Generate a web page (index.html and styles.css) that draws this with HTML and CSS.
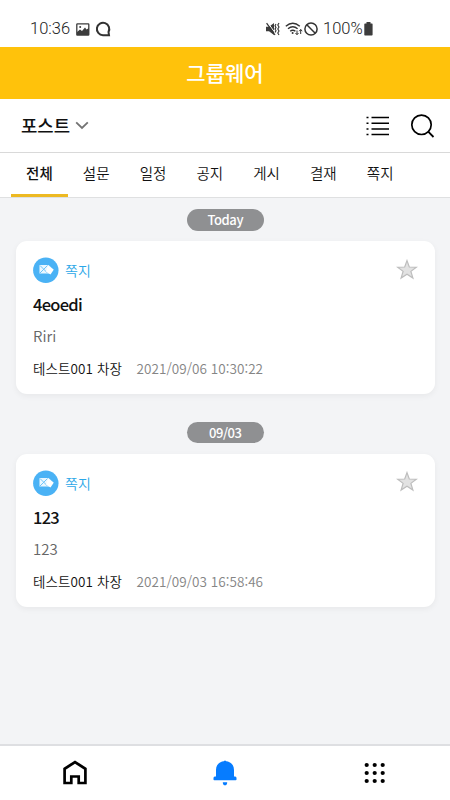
FILE: index.html
```html
<!DOCTYPE html>
<html lang="ko">
<head>
<meta charset="utf-8">
<meta name="viewport" content="width=device-width, initial-scale=1">
<title>그룹웨어</title>
<link rel="stylesheet" href="styles.css">
</head>
<body>
<svg class="defs" width="0" height="0">
  <symbol id="message" viewBox="0 0 26 26">
    <circle cx="12.800" cy="13.200" r="12.700" fill="#4ab2f5"/>
    <path d="M6.500 8h9l5 4.500-3.500 4H6.500z" fill="#eaf7ff"/>
    <path d="M7 8.500l7.500 7.500M7 16L14.500 8.500" stroke="#71c4f8" stroke-width="1" fill="none"/>
    <path d="M15 8.800l5.700 4-3.200 4.700-4.500-3z" fill="#fff"/>
  </symbol>
  <symbol id="star" viewBox="0 0 22 21">
    <path d="M11 1.600l2.300 6.400 7 .2-5.400 4.200 2 6.600L11 15.200 5.100 19l2-6.600L1.700 8.200l7-.2z" fill="#e2e2e2" stroke="#bdbdbd" stroke-width="1.200"/>
  </symbol>
</svg>
<div class="app">
  <div class="status">
    <span class="clock">10:36</span>
    <svg class="s-photo" width="14" height="13" viewBox="0 0 14 13"><rect x=".8" y=".8" width="12" height="11.400" rx=".6" fill="none" stroke="#3c3c3c" stroke-width="1.300"/><path d="M1 9l3-2.500 2 1.500 3-3.500 1.500 2L13 5v7H1z" fill="#3c3c3c"/><circle cx="4.200" cy="4" r="1" fill="#3c3c3c"/></svg>
    <svg class="s-chat" width="16" height="16" viewBox="0 0 16 16"><path d="M14 14.200H8A6.200 6.200 0 1 1 13.500 11z" fill="none" stroke="#333" stroke-width="2"/></svg>
    <svg class="s-mute" width="14" height="14" viewBox="0 0 14 14"><path d="M0 4.800h3L8 1v12L3 9.200H0z" fill="#3c3c3c"/><path d="M1.800 .8l8 11" stroke="#fff" stroke-width="1"/><path d="M.6 1.200L9 13" stroke="#333" stroke-width="1.200"/><path d="M10 2l-1 1.700 1 1.700-1 1.700 1 1.700-1 1.700M13 1l-1.200 2L13 5l-1.200 2L13 9l-1.200 2 1.200 2" fill="none" stroke="#333" stroke-width="1.100"/></svg>
    <svg class="s-wifi" width="18" height="14" viewBox="0 0 18 14"><path d="M.8 4.200q7-6 14 0M3 6.800q4.800-4 9.600 0M5.200 9.200q2.600-2 5.200 0" fill="none" stroke="#333" stroke-width="1.400"/><circle cx="7.600" cy="11" r="1" fill="#333"/><path d="M12 8.500v4m-1.500-1.500l1.500 1.700 1.500-1.700M15.700 12V7.500m-1.500 1.700l1.500-1.700 1.500 1.700" fill="none" stroke="#333" stroke-width="1"/></svg>
    <svg class="s-block" width="14" height="14" viewBox="0 0 14 14"><circle cx="7" cy="7" r="6.100" fill="none" stroke="#333" stroke-width="1.500"/><path d="M2.800 2.800l8.400 8.400" stroke="#333" stroke-width="1.500"/></svg>
    <span class="percent">100%</span>
    <svg class="s-battery" width="9" height="14" viewBox="0 0 9 14"><path d="M2.500 0h4v1.500H8q.6 0 .6.700v10.600q0 .8-.8.800H1q-.7 0-.7-.8V2.200q0-.7.700-.7h1.500z" fill="#3c3c3c"/></svg>
  </div>
  <header class="header">그룹웨어</header>
  <div class="toolbar">
    <span class="board">포스트</span>
    <svg class="chevron" width="14" height="9" viewBox="0 0 14 9"><path d="M1.200 1.300L7 7l5.800-5.700" fill="none" stroke="#737373" stroke-width="1.800"/></svg>
    <svg class="list-icon" width="23" height="20" viewBox="0 0 23 20"><path d="M5.500 1.500H23M5.500 7.300H23M5.500 13H23M5.500 18.500H23" stroke="#000" stroke-width="1.500"/><path d="M.5 1.500h2M.5 7.300h2M.5 13h2M.5 18.500h2" stroke="#000" stroke-width="1.500"/></svg>
    <svg class="search-icon" width="25" height="25" viewBox="0 0 25 25"><circle cx="11.500" cy="11.800" r="9.700" fill="none" stroke="#000" stroke-width="1.700"/><path d="M18.200 18.700l5.300 5.300" stroke="#000" stroke-width="1.800"/></svg>
  </div>
  <nav class="tabs">
    <span class="tab active">전체</span><span class="tab">설문</span><span class="tab">일정</span><span class="tab">공지</span><span class="tab">게시</span><span class="tab">결재</span><span class="tab">쪽지</span>
  </nav>
  <main class="feed">
    <div class="date">Today</div>
    <article class="card">
      <div class="card-top"><svg class="badge"><use href="#message"/></svg><span class="kind">쪽지</span><svg class="star"><use href="#star"/></svg></div>
      <div class="title">4eoedi</div>
      <div class="text">Riri</div>
      <div class="meta"><span class="author">테스트001 차장</span><span class="time">2021/09/06 10:30:22</span></div>
    </article>
    <div class="date">09/03</div>
    <article class="card">
      <div class="card-top"><svg class="badge"><use href="#message"/></svg><span class="kind">쪽지</span><svg class="star"><use href="#star"/></svg></div>
      <div class="title">123</div>
      <div class="text">123</div>
      <div class="meta"><span class="author">테스트001 차장</span><span class="time">2021/09/03 16:58:46</span></div>
    </article>
  </main>
  <nav class="bottom">
    <span><svg width="24" height="26" viewBox="0 0 24 26"><path d="M1.600 23V8.800L12 2l10.400 6.800V23h-6.700v-6.500H8.300V23z" fill="none" stroke="#000" stroke-width="2.700"/></svg></span>
    <span><svg width="24" height="26" viewBox="0 0 24 26"><path d="M10.800 1.300Q12-.3 13.200 1.300C18.300 2 21 5.300 21 10v6.500h1.200q1.300 0 1.300 1.500v1.500q0 .8-.8.800H1.300q-.8 0-.8-.8V18q0-1.500 1.300-1.500H3V10c0-4.700 2.700-8 7.800-8.700zM9.800 22.200h4.400q0 3.100-2.200 3.100t-2.200-3.100z" fill="#067cff"/></svg></span>
    <span><svg width="22" height="22" viewBox="0 0 22 22"><g fill="#000"><circle cx="2.700" cy="3" r="2.100"/><circle cx="10.700" cy="3" r="2.100"/><circle cx="18.700" cy="3" r="2.100"/><circle cx="2.700" cy="11" r="2.100"/><circle cx="10.700" cy="11" r="2.100"/><circle cx="18.700" cy="11" r="2.100"/><circle cx="2.700" cy="19" r="2.100"/><circle cx="10.700" cy="19" r="2.100"/><circle cx="18.700" cy="19" r="2.100"/></g></svg></span>
  </nav>
</div>
</body>
</html>
```
FILE: styles.css
```css
* { box-sizing: border-box; }
body { margin: 0; background: #fff; font-family: "Noto Sans CJK KR", sans-serif; color: #111; }
svg { display: block; flex: none; }
.defs { position: absolute; }
.app { width: 450px; height: 800px; display: flex; flex-direction: column; overflow: hidden; }
.status { height: 47px; flex: none; display: flex; align-items: center; padding: 11px 0 0 30px; font: 300 16.5px/20px Roboto, sans-serif; color: #222; white-space: nowrap; }
.clock { width: 46px; }
.s-chat { margin-left: 5px; }
.s-mute { margin-left: 155px; }
.s-wifi { margin-left: 5px; }
.s-block { margin-left: 1px; }
.percent { width: 41px; margin-left: 5px; }
.header { height: 52px; flex: none; background: #ffc20b; color: #fff; text-align: center; font-size: 21px; line-height: 50px; font-weight: 500; }
.toolbar { height: 54px; flex: none; display: flex; align-items: center; border-bottom: 1px solid #d9d9d9; padding: 0 15px 0 21px; }
.board { font-size: 17.800px; line-height: 26px; margin-top: -2px; font-weight: 500; }
.chevron { margin-left: 5px; }
.list-icon { margin-left: auto; }
.search-icon { margin-left: 21px; }
.tabs { height: 45px; flex: none; display: flex; padding-left: 11px; border-bottom: 1px solid #dfe0e1; }
.tab { width: 56.800px; height: 44px; text-align: center; font-size: 14.500px; line-height: 39px; font-weight: 350; }
.active { font-weight: 500; border-bottom: 3px solid #edb922; }
.feed { flex: 1; background: #f3f4f6; padding: 11px 15.500px 0 16px; }
.date { width: 77px; height: 21.500px; margin: 0 auto 10.500px; border-radius: 11px; background: #8f9092; color: #fff; text-align: center; font-size: 13px; line-height: 21px; font-weight: 500; letter-spacing: -.4px; }
.card { height: 153.300px; margin-bottom: 27.700px; padding: 15px 17px; background: #fff; border-radius: 11px; box-shadow: 0 2px 6px rgba(0,0,0,.05); }
.card-top { display: flex; height: 28px; align-items: center; }
.badge { width: 26px; height: 26px; }
.kind { margin-left: 6px; color: #2ba7e8; font-size: 14px; line-height: 26px; font-weight: 350; }
.star { width: 22px; height: 21px; margin: -2px 0 0 auto; }
.title { margin-top: 7px; font-size: 16.500px; line-height: 26px; font-weight: 500; letter-spacing: -.75px; }
.text { margin-top: 8px; color: #666; font-size: 15px; line-height: 22px; font-weight: 350; }
.meta { display: flex; margin-top: 11px; font-size: 13.500px; line-height: 20px; white-space: nowrap; font-weight: 350; }
.author { width: 103.500px; letter-spacing: .1px; }
.time { color: #858585; letter-spacing: .06px; }
.bottom { height: 56px; flex: none; border-top: 2px solid #dedfe2; display: grid; grid-template-columns: repeat(3, 1fr); }
.bottom span { display: flex; align-items: center; justify-content: center; }
```
